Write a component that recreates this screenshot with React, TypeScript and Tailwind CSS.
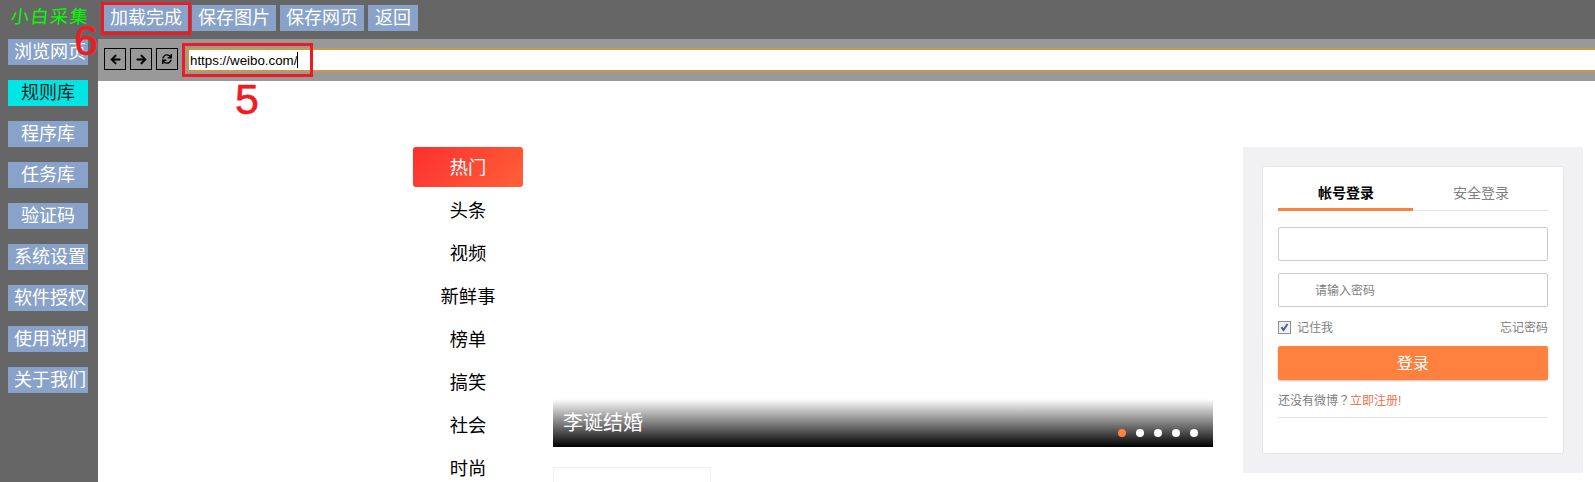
import { FaArrowLeft, FaArrowRight, FaSync } from 'react-icons/fa';

const actions = ['加载完成', '保存图片', '保存网页', '返回'];

const menu = ['浏览网页', '规则库', '程序库', '任务库', '验证码', '系统设置', '软件授权', '使用说明', '关于我们'];

const categories = ['热门', '头条', '视频', '新鲜事', '榜单', '搞笑', '社会', '时尚'];

function TopBar() {
  return (
    <header className="flex h-[39px] shrink-0 items-start bg-[#666666]">
      <div className="flex h-[34px] w-[104px] shrink-0 items-center pl-[11px]">
        <span className="-skew-x-6 text-[18px] leading-none tracking-[1.6px] whitespace-nowrap text-[#00ff00]">小白采集</span>
      </div>
      <div className="flex gap-1 pt-[5px]">
        {actions.map((label) => (
          <button
            key={label}
            className={`h-[26px] shrink-0 bg-[#88a2c9] text-center text-[18px] leading-[27px] whitespace-nowrap text-white ${
              label.length === 4 ? 'w-21' : 'w-[50px]'
            }`}
          >
            {label}
          </button>
        ))}
      </div>
    </header>
  );
}

function Sidebar() {
  return (
    <aside className="flex w-[98px] shrink-0 flex-col gap-[15px] bg-[#666666] px-2">
      {menu.map((label) => (
        <button
          key={label}
          className={`h-[26px] w-20 shrink-0 px-1.5 text-[18px] leading-[27px] whitespace-nowrap ${
            label === '规则库' ? 'bg-[#00e4e4] text-[#222222]' : 'bg-[#88a2c9] text-white'
          }`}
        >
          <span className={label.length === 4 ? 'block w-[72px]' : 'block'}>{label}</span>
        </button>
      ))}
    </aside>
  );
}

function AddressBar() {
  const box = 'flex size-[22px] shrink-0 items-center justify-center border border-black text-black';
  return (
    <div className="flex h-[42px] shrink-0 items-start gap-1 bg-[#999999] pt-[9px] pl-1.5">
      <button className={box}><FaArrowLeft className="size-[11px] stroke-black stroke-[20]" /></button>
      <button className={box}><FaArrowRight className="size-[11px] stroke-black stroke-[20]" /></button>
      <button className={box}><FaSync className="size-[10px]" /></button>
      <div className="ml-[5px] flex h-6 flex-1 items-center border-2 border-r-0 border-[#c59a48] bg-white pl-px">
        <span className="pt-px text-[13.33px] leading-none text-black">https://weibo.com/</span>
        <span className="h-4 w-px bg-black" />
      </div>
    </div>
  );
}

function Categories() {
  return (
    <nav className="flex w-[110px] shrink-0 flex-col gap-[3px] pt-[66px]">
      {categories.map((label) => (
        <a
          key={label}
          className={`h-10 shrink-0 rounded-[3px] text-center text-[18.3px] leading-[42px] ${
            label === '热门' ? 'bg-[linear-gradient(135deg,#fd2f2f,#ff6038)] text-white' : 'text-black'
          }`}
        >
          {label}
        </a>
      ))}
    </nav>
  );
}

function Feature() {
  return (
    <section className="ml-[30px] flex w-[660px] shrink-0 flex-col">
      <div className="mt-[318px] flex h-12 shrink-0 items-center justify-between bg-linear-to-b from-transparent to-black pr-[15px] pl-2.5">
        <span className="text-[20px] leading-none text-white">李诞结婚</span>
        <div className="flex gap-2.5 pt-5">
          <i className="size-2 rounded-full bg-[#ff8140]" />
          <i className="size-2 rounded-full bg-white" />
          <i className="size-2 rounded-full bg-white" />
          <i className="size-2 rounded-full bg-white" />
          <i className="size-2 rounded-full bg-white" />
        </div>
      </div>
      <div className="mt-5 h-20 w-[158px] shrink-0 border border-[#f2f2f5]" />
    </section>
  );
}

function Login() {
  return (
    <section className="mt-[66px] ml-[30px] h-[326px] w-[340px] shrink-0 bg-[#f1f1f4] px-5 pt-5">
      <div className="-mx-px -mt-px h-[288px] rounded-[3px] border border-[#e6e6e6] bg-white px-[15px] text-[12px] text-[#808080]">
        <div className="flex h-11 text-center text-[14px] leading-[52px]">
          <div className="flex-1 border-b-[3px] border-[#ff7f3e] pl-px font-bold text-black">帐号登录</div>
          <div className="flex-1 border-b border-[#e3e3e3] pl-px">安全登录</div>
        </div>
        <div className="mt-4 h-[34px] rounded-[2px] border border-[#cccccc]" />
        <div className="mt-3 h-[34px] rounded-[2px] border border-[#cccccc] pl-9 leading-[34px]">请输入密码</div>
        <div className="mt-[11px] flex h-[19px] items-center">
          <span className="flex size-[13px] items-center justify-center border border-[#8e8f8f] bg-[#f0f0f0]">
            <svg viewBox="0 0 11 11" className="size-[11px]" fill="none" stroke="#4b5f9f" strokeWidth="2">
              <path d="M2.5 5.2 4.5 8 8.5 2" />
            </svg>
          </span>
          <span className="ml-1.5">记住我</span>
          <span className="ml-auto">忘记密码</span>
        </div>
        <button className="mt-[9px] block h-[34px] w-full rounded-[2px] bg-[#ff8140] text-[16px] leading-[36px] text-white shadow-[0_1px_2px_rgba(0,0,0,0.25)]">
          登录
        </button>
        <div className="h-[38px] border-b border-[#e3e3e3] leading-[39px]">
          还没有微博<span className="font-['Noto_Sans_CJK_TC',sans-serif]">？</span>
          <span className="text-[#eb7350]">立即注册!</span>
        </div>
      </div>
    </section>
  );
}

function Annotations() {
  return (
    <div className="pointer-events-none text-[#ed1c24]">
      <div className="absolute top-[2px] left-[101px] h-[33px] w-[90px] border-3 border-[#ed1c24]" />
      <div className="absolute top-[43px] left-[182px] h-[34px] w-[131px] border-3 border-[#ed1c24]" />
      <span className="absolute top-[19px] left-[74px] text-[43px] leading-none [-webkit-text-stroke:0.6px_#ed1c24]">6</span>
      <span className="absolute top-[78px] left-[235px] text-[43px] leading-none [-webkit-text-stroke:0.6px_#ed1c24]">5</span>
    </div>
  );
}

export default function App() {
  return (
    <div className="relative flex h-[482px] w-[1595px] flex-col overflow-hidden bg-white font-['Liberation_Sans','Noto_Sans_CJK_SC',sans-serif]">
      <TopBar />
      <div className="flex min-h-0 flex-1">
        <Sidebar />
        <main className="flex min-w-0 flex-1 flex-col">
          <AddressBar />
          <div className="flex min-h-0 flex-1 overflow-hidden pl-[315px]">
            <Categories />
            <Feature />
            <Login />
          </div>
        </main>
      </div>
      <Annotations />
    </div>
  );
}
